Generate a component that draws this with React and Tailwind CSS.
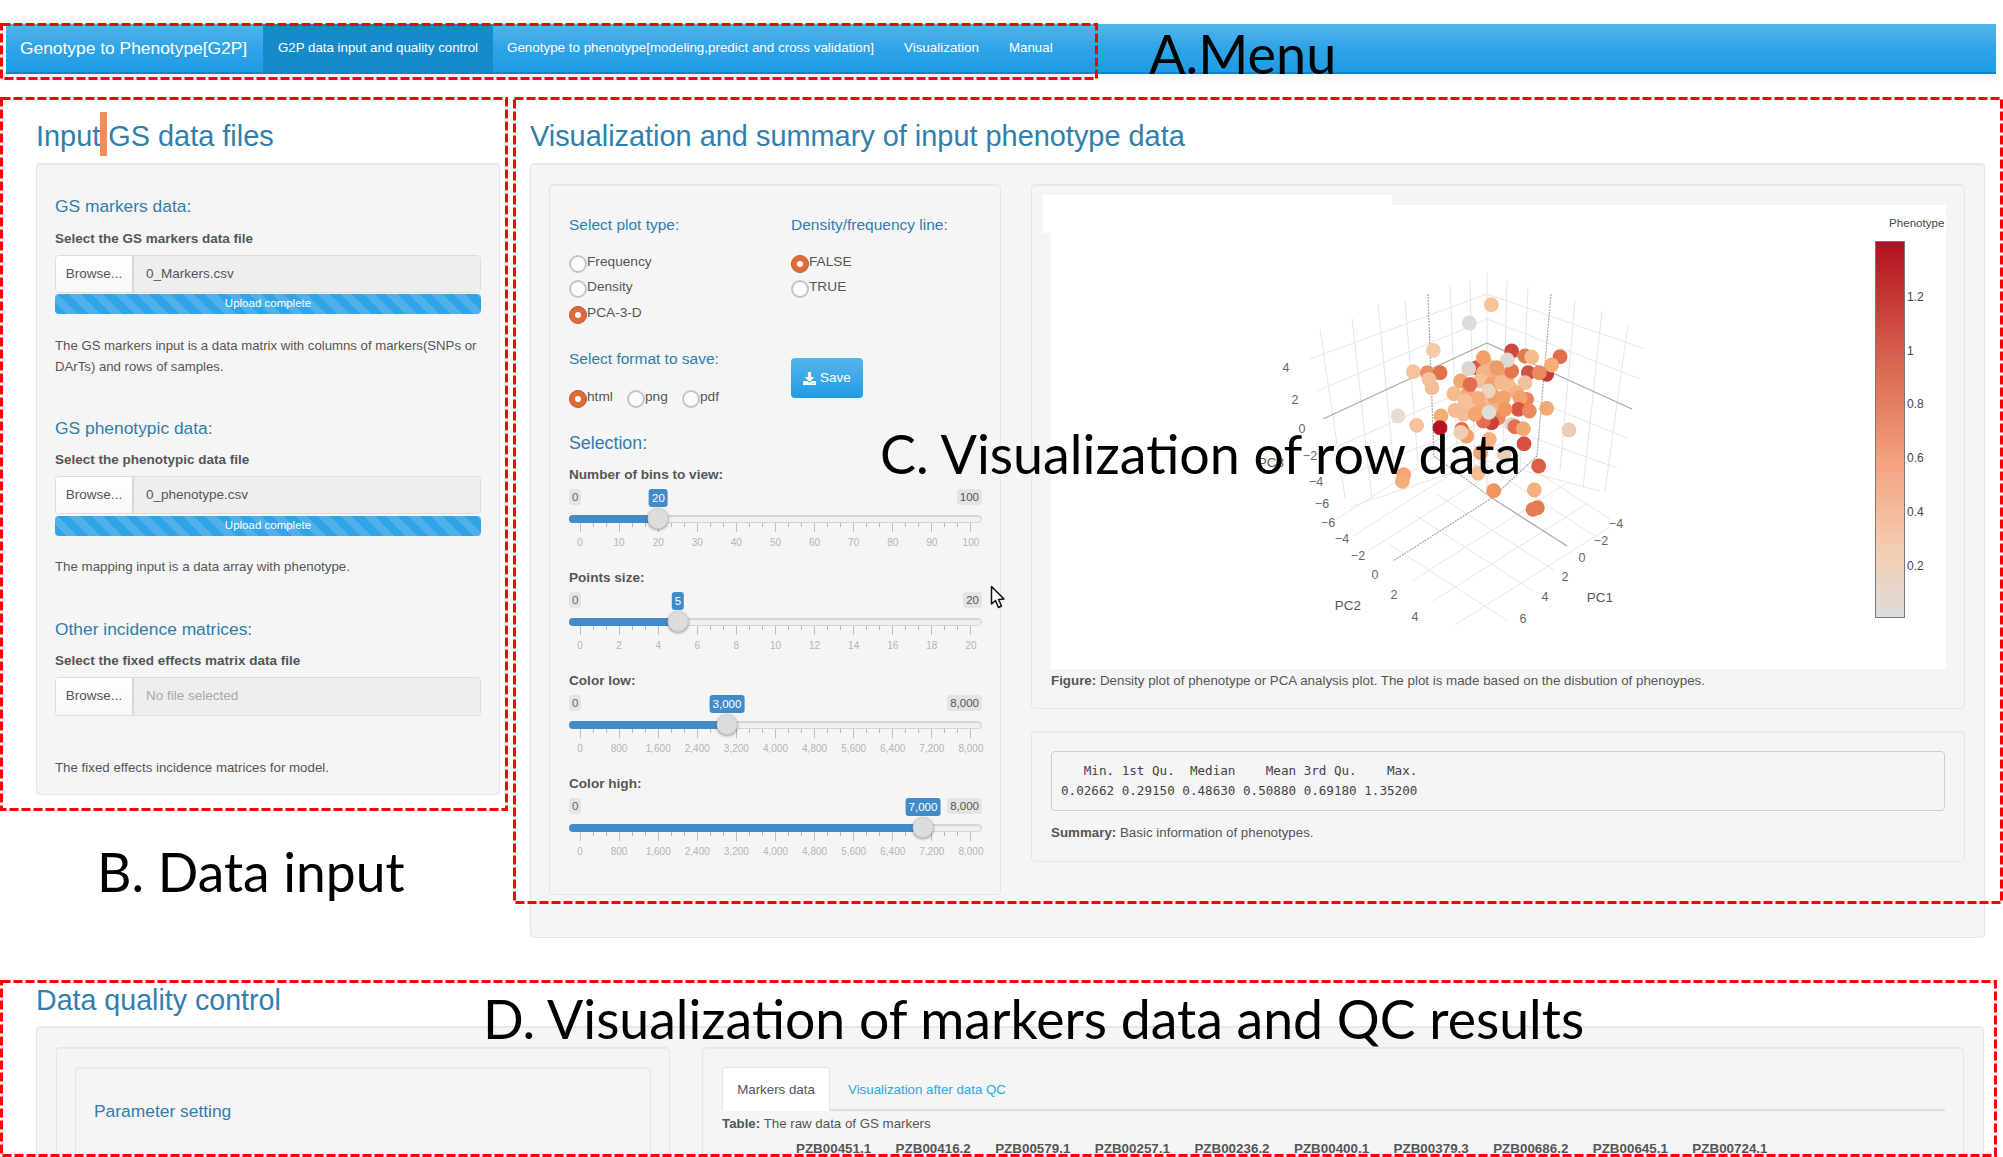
import React from "react";
import { FaDownload } from "react-icons/fa";

const POINTS = [
  [724,101,"#f6c39a"],[658,156,"#dedad6"],[550,238,"#f3cba9"],[490,302,"#f5c49c"],[532,305,"#eb8e60"],[570,305,"#e2704d"],
  [537,325,"#f3c19b"],[546,350,"#f4bf98"],[785,240,"#c94a3e"],[825,255,"#e17a52"],[845,258,"#f6ba8b"],[930,257,"#e06a4a"],
  [890,310,"#c93a36"],[835,305,"#d2503f"],[868,305,"#ea8a5c"],[905,282,"#f5ae78"],[680,290,"#d45a45"],[715,285,"#f4b78b"],
  [745,305,"#f2a873"],[700,305,"#f4b485"],[735,320,"#f3ad7c"],[770,320,"#f2a570"],[655,365,"#f2a672"],[700,385,"#f4bd94"],
  [735,395,"#f3b083"],[780,350,"#f4bd96"],[730,375,"#efa06b"],[660,410,"#f5c09a"],[695,415,"#f3ab79"],[745,440,"#ec8a5e"],
  [700,260,"#f2a06a"],[785,300,"#e5774f"],[772,267,"#dfd9d3"],[656,293,"#dfd5cc"],[740,290,"#ef9b68"],[632,330,"#f3a874"],
  [690,330,"#f4c09a"],[660,340,"#e36d4d"],[725,340,"#f2a16d"],[755,335,"#f5ba8f"],[825,335,"#f3c19d"],[715,360,"#ecd4c0"],
  [612,368,"#f5bb8f"],[685,382,"#f3ad7c"],[645,390,"#f4c19a"],[800,365,"#f3b184"],[760,380,"#f2a46f"],[830,385,"#ea8458"],
  [810,380,"#f2a36d"],[805,415,"#d85443"],[838,420,"#ed8a5c"],[890,412,"#f4a975"],[725,455,"#cc4136"],[700,450,"#e46f4e"],
  [615,418,"#f5ba8f"],[640,430,"#f4bd96"],[675,430,"#f3a56f"],[765,415,"#f1985f"],[717,424,"#e0dcd8"],[573,435,"#f4ad79"],
  [444,435,"#e8dcd0"],[500,463,"#f5c09a"],[570,470,"#b5141e"],[635,475,"#e36d4d"],[650,495,"#f1a06a"],[632,484,"#f0cdb3"],
  [785,460,"#e0d6cc"],[795,467,"#e46e4f"],[820,473,"#f2a974"],[957,477,"#ecccb4"],[718,505,"#f4b181"],[822,518,"#d4503f"],
  [692,545,"#f2a46f"],[762,548,"#e5d0bc"],[866,585,"#dc5f45"],[684,606,"#f5bd94"],[461,611,"#f3a672"],[457,631,"#f3ad7b"],
  [731,659,"#ee9560"],[853,657,"#f4b07e"],[862,710,"#e87851"],[849,715,"#e67b54"],
];

const LEFT_ROWS = [[293,1310,358],[318,1317,390],[342,1323,418],[380,1338,445],[420,1345,475],[460,1350,506]];
const RIGHT_ROWS = [[293,1645,348],[318,1640,378],[342,1632,408],[380,1627,437],[420,1617,467],[460,1600,490]];
const WALL_V = [
  [1320,328,1345,497],[1352,317,1372,498],[1378,303,1395,478],[1405,300,1418,462],[1450,285,1458,470],[1470,280,1475,480],[1487,272,1487,490],
  [1507,280,1502,480],[1528,285,1520,470],[1575,300,1560,470],[1602,310,1583,487],[1628,323,1605,490],
];
const FLOOR_A = [[1337,518],[1353,535],[1368,550],[1412,580],[1433,600],[1455,624]];
const FLOOR_B = [[1610,518],[1595,535],[1554,569],[1533,590],[1508,620]];
const TICKS = [
  ["4",1286,367],["2",1295,399],["0",1302,428],["−2",1310,455],["−4",1316,481],["−6",1322,503],
  ["−6",1328,522],["−4",1342,538],["−2",1358,555],["0",1375,574],["2",1394,594],["4",1415,616],
  ["−4",1616,523],["−2",1601,540],["0",1582,557],["2",1565,576],["4",1545,596],["6",1523,618],
];
const CBAR = [["1.2",296],["1",350],["0.8",403],["0.6",457],["0.4",511],["0.2",565]];

function Plot3D() {
  return (
    <svg viewBox="1051 204 895 464" className="block w-[895px] h-[464px] bg-white">
      <defs>
        <linearGradient id="cb" x1="0" y1="0" x2="0" y2="1">
          <stop offset="0" stopColor="#b10f1e" />
          <stop offset="0.3" stopColor="#d6604d" />
          <stop offset="0.6" stopColor="#f4a582" />
          <stop offset="0.82" stopColor="#f3cdb2" />
          <stop offset="1" stopColor="#dcdcdc" />
        </linearGradient>
      </defs>
      <g stroke="#e6e6e6" strokeWidth="1" fill="none">
        {LEFT_ROWS.map(([y, x2, y2], i) => i !== 2 && <line key={"l" + i} x1="1487" y1={y} x2={x2} y2={y2} />)}
        {RIGHT_ROWS.map(([y, x2, y2], i) => i !== 2 && <line key={"r" + i} x1="1487" y1={y} x2={x2} y2={y2} />)}
        {WALL_V.map(([a, b, c, d], i) => <line key={"v" + i} x1={a} y1={b} x2={c} y2={d} />)}
        {FLOOR_A.map(([a, b], i) => <line key={"a" + i} x1={a} y1={b} x2={a + 155} y2={b - 98} />)}
        {FLOOR_B.map(([a, b], i) => <line key={"b" + i} x1={a} y1={b} x2={a - 118} y2={b - 76} />)}
      </g>
      <g stroke="#a8a8a8" strokeWidth="1.2" fill="none">
        <line x1="1487" y1="342" x2="1323" y2="418" />
        <line x1="1487" y1="342" x2="1632" y2="408" />
        <line x1="1428" y1="293" x2="1434" y2="455" strokeDasharray="2 1" />
        <line x1="1551" y1="293" x2="1537" y2="455" strokeDasharray="2 1" />
        <line x1="1537" y1="455" x2="1492" y2="497" strokeDasharray="2 1" />
        <line x1="1434" y1="455" x2="1492" y2="497" strokeDasharray="2 1" />
        <line x1="1492" y1="497" x2="1567" y2="545" />
        <line x1="1492" y1="497" x2="1393" y2="560" strokeDasharray="2 1" />
      </g>
      {POINTS.map(([x, y, c], i) => (
        <circle key={i} cx={1250 + x / 3} cy={270 + y / 3} r="7.4" fill={c} />
      ))}
      <g fill="#666" fontSize="12.5" textAnchor="middle" dominantBaseline="central">
        {TICKS.map(([t, x, y], i) => <text key={i} x={x} y={y}>{t}</text>)}
      </g>
      <g fill="#555" fontSize="13.5" textAnchor="middle" dominantBaseline="central">
        <text x="1271" y="461">PC3</text>
        <text x="1348" y="604">PC2</text>
        <text x="1600" y="596">PC1</text>
      </g>
      <text x="1889" y="221" fontSize="11.6" fill="#444" dominantBaseline="central">Phenotype</text>
      <rect x="1875.5" y="240.5" width="29" height="376" fill="url(#cb)" stroke="#777" />
      <g fill="#444" fontSize="12" dominantBaseline="central">
        {CBAR.map(([t, y]) => <text key={t} x="1907" y={y}>{t}</text>)}
      </g>
    </svg>
  );
}

function Heading({ className, children }) {
  return <div className={`text-[#317eac] text-[17.4px] leading-[24px] h-[24px] ${className}`}>{children}</div>;
}

function FieldLabel({ className, children }) {
  return <div className={`font-bold text-[13.5px] leading-[20px] h-[20px] text-[#555] ${className}`}>{children}</div>;
}

function FileInput({ name, className, empty }) {
  return (
    <div className={`flex rounded-[4px] border border-[#dcdcdc] overflow-hidden text-[13.5px] ${className}`}>
      <div className="w-[78px] flex items-center justify-center bg-gradient-to-b from-white to-[#f8f8f8] text-[#555] border-r-2 border-[#d8d8d8]">Browse...</div>
      <div className={`flex-1 flex items-center pl-[12px] bg-[#eeeeee] ${empty ? "text-[#a8a8a8]" : "text-[#555]"}`}>{name}</div>
    </div>
  );
}

function Progress({ className }) {
  return (
    <div className={`rounded-[4px] text-white text-[11.5px] flex items-center justify-center bg-[repeating-linear-gradient(45deg,#2fa4e7_0_8px,#4fb0ea_8px_16px)] ${className}`}>
      Upload complete
    </div>
  );
}

function Radio({ on, className = "" }) {
  return on ? (
    <span className={`block shrink-0 w-[18px] h-[18px] rounded-full bg-[#dd6a37] border border-[#c5552a] flex items-center justify-center ${className}`}>
      <span className="block w-[6px] h-[6px] rounded-full bg-white" />
    </span>
  ) : (
    <span className={`block shrink-0 w-[18px] h-[18px] rounded-full bg-[#fbfbfb] border-2 border-[#c4c4c4] ${className}`} />
  );
}

function RadioRow({ on, label, className }) {
  return (
    <div className={`flex items-start text-[13.7px] leading-[20px] text-[#555] ${className}`}>
      <Radio on={on} className="mt-[3px] mr-[-1px]" />
      <span className="ml-[1px]">{label}</span>
    </div>
  );
}

function Slider({ label, min, max, value, frac, labels }) {
  const center = 11 + frac * 392;
  const ticks = Array.from({ length: 31 }, (_, i) => i);
  return (
    <div className="h-[103px] w-[413px]">
      <div className="font-bold text-[13.6px] leading-[20px] h-[20px] text-[#555]">{label}</div>
      <div className="relative h-[18px] mt-[4px] text-[11.5px] leading-[16px]">
        <span className="absolute left-0 top-0 h-[16px] rounded-[3px] bg-[#e4e4e4] text-[#666] px-[3px]">{min}</span>
        <span className="absolute right-0 top-0 h-[16px] rounded-[3px] bg-[#e4e4e4] text-[#555] px-[3px]">{max}</span>
        <span className="absolute top-0 h-[18px] leading-[19px] rounded-[3px] bg-[#428bca] text-white px-[3px] -translate-x-1/2" style={{ left: center }}>{value}</span>
      </div>
      <div className="relative h-[8px] mt-[8px] rounded-full bg-[#f0f0f0] border border-[#d4d4d4] shadow-[inset_0_1px_1px_rgba(0,0,0,0.12)]">
        <div className="absolute left-[-1px] top-[-1px] h-[8px] rounded-l-full bg-[#428bca]" style={{ width: center }} />
        <div className="absolute top-[-8px] w-[21px] h-[21px] rounded-full bg-[#dddddd] border border-[#cfcfcf] shadow-[0_1px_3px_rgba(0,0,0,0.4)] -translate-x-1/2" style={{ left: center - 1 }} />
      </div>
      <div className="flex justify-between items-start mx-[11px] h-[9px]">
        {ticks.map((i) =>
          i % 3 === 0 ? (
            <span key={i} className="block w-px h-[9px] bg-[#a8c4e0]" />
          ) : (
            <span key={i} className="block w-px h-[4px] bg-[#b8b8b8]" />
          )
        )}
      </div>
      <div className="flex justify-between mx-[11px] mt-[5px] h-[12px] text-[10px] leading-[12px] text-[#b4b4b4]">
        {labels.map((t, i) => (
          <span key={i} className="w-0 flex justify-center whitespace-nowrap">{t}</span>
        ))}
      </div>
    </div>
  );
}

function DashBox({ left, top, width, height }) {
  return (
    <svg className="absolute pointer-events-none" style={{ left, top }} width={width} height={height}>
      <rect x="1.5" y="1.5" width={width - 3} height={height - 3} fill="none" stroke="#ff0000" strokeWidth="3" strokeDasharray="9 3" />
    </svg>
  );
}

const L100 = ["0","10","20","30","40","50","60","70","80","90","100"];
const L20 = ["0","2","4","6","8","10","12","14","16","18","20"];
const L8K = ["0","800","1,600","2,400","3,200","4,000","4,800","5,600","6,400","7,200","8,000"];
const COLS = ["PZB00451.1","PZB00416.2","PZB00579.1","PZB00257.1","PZB00236.2","PZB00400.1","PZB00379.3","PZB00686.2","PZB00645.1","PZB00724.1"];
const WELL = "bg-[#f5f5f5] border border-[#e6e6e6] rounded-[4px] shadow-[inset_0_1px_1px_rgba(0,0,0,0.05)]";

export default function App() {
  return (
    <div className="relative w-[2003px] h-[1157px] overflow-hidden bg-white text-[#555] font-['Liberation_Sans',Arial,sans-serif]">
      {/* Navbar */}
      <nav className="ml-[6px] mt-[24px] w-[1990px] h-[50px] flex items-stretch text-white bg-gradient-to-b from-[#54b4eb] via-[#2fa4e7] to-[#1d9ce5] border-b-2 border-[#1082cf] shadow-[0_4px_8px_rgba(0,0,0,0.06)]">
        <div className="flex items-center w-[257px] pl-[14px] text-[17.4px]">Genotype to Phenotype[G2P]</div>
        <div className="flex items-center w-[230px] justify-center bg-[#178acc] text-[13.3px]">G2P data input and quality control</div>
        <div className="flex items-center pl-[14px] w-[411px] text-[13.4px]">Genotype to phenotype[modeling,predict and cross validation]</div>
        <div className="flex items-center w-[105px] text-[13.4px]">Visualization</div>
        <div className="flex items-center text-[13.3px]">Manual</div>
      </nav>

      {/* Upper content */}
      <div className="flex mt-[42px]">
        {/* Data input */}
        <div className="w-[530px] pl-[36px] shrink-0">
          <h2 className="h-[47px] text-[28.9px] leading-[41px] text-[#317eac]">Input GS data files</h2>
          <div className={`w-[464px] h-[632px] pt-[30px] px-[18px] ${WELL}`}>
            <Heading>GS markers data:</Heading>
            <FieldLabel className="mt-[11px]">Select the GS markers data file</FieldLabel>
            <FileInput name="0_Markers.csv" className="mt-[6px] h-[38px]" />
            <Progress className="mt-[1px] h-[20px]" />
            <p className="mt-[21px] text-[13.2px] leading-[21px] whitespace-nowrap">The GS markers input is a data matrix with columns of markers(SNPs or<br />DArTs) and rows of samples.</p>
            <Heading className="mt-[38.5px]">GS phenotypic data:</Heading>
            <FieldLabel className="mt-[10px]">Select the phenotypic data file</FieldLabel>
            <FileInput name="0_phenotype.csv" className="mt-[6.5px] h-[38px]" />
            <Progress className="mt-[2px] h-[20px]" />
            <p className="mt-[20px] text-[13.3px] leading-[21px]">The mapping input is a data array with phenotype.</p>
            <Heading className="mt-[40px]">Other incidence matrices:</Heading>
            <FieldLabel className="mt-[10px]">Select the fixed effects matrix data file</FieldLabel>
            <FileInput name="No file selected" empty className="mt-[6px] h-[39px]" />
            <p className="mt-[41px] text-[13.3px] leading-[21px]">The fixed effects incidence matrices for model.</p>
          </div>
        </div>

        {/* Visualization */}
        <div className="flex-1">
          <h2 className="h-[47px] text-[28.9px] leading-[41px] text-[#317eac]">Visualization and summary of input phenotype data</h2>
          <div className={`w-[1455px] h-[775px] pt-[20px] pl-[18px] flex items-start gap-[30px] ${WELL}`}>
            {/* Controls */}
            <div className={`w-[452px] h-[711px] pt-[29px] pl-[19px] shrink-0 ${WELL}`}>
              <div className="flex h-[217px]">
                <div className="w-[222px]">
                  <div className="text-[#317eac] text-[15.5px] leading-[22px] h-[22px]">Select plot type:</div>
                  <RadioRow label="Frequency" className="mt-[16px] h-[25px]" />
                  <RadioRow label="Density" className="h-[26px]" />
                  <RadioRow label="PCA-3-D" on className="h-[25px]" />
                  <div className="text-[#317eac] text-[15.5px] leading-[22px] h-[22px] mt-[20px]">Select format to save:</div>
                  <div className="flex mt-[17px] h-[22px]">
                    <RadioRow on label="html" className="w-[58px]" />
                    <RadioRow label="png" className="w-[55px]" />
                    <RadioRow label="pdf" />
                  </div>
                </div>
                <div>
                  <div className="text-[#317eac] text-[15.5px] leading-[22px] h-[22px]">Density/frequency line:</div>
                  <RadioRow on label="FALSE" className="mt-[16px] h-[25px]" />
                  <RadioRow label="TRUE" className="h-[25px]" />
                  <button className="mt-[56px] w-[72px] h-[40px] rounded-[4px] flex items-center justify-center gap-[4px] text-white text-[13.5px] bg-gradient-to-b from-[#54b4eb] to-[#1d9ce5]">
                    <FaDownload className="w-[13px] h-[13px]" />Save
                  </button>
                </div>
              </div>
              <div className="text-[#317eac] text-[17.8px] leading-[24px] h-[24px]">Selection:</div>
              <div className="mt-[10px]">
                <Slider label="Number of bins to view:" min="0" max="100" value="20" frac={0.2} labels={L100} />
                <Slider label="Points size:" min="0" max="20" value="5" frac={0.25} labels={L20} />
                <Slider label="Color low:" min="0" max="8,000" value="3,000" frac={0.375} labels={L8K} />
                <Slider label="Color high:" min="0" max="8,000" value="7,000" frac={0.875} labels={L8K} />
              </div>
            </div>

            {/* Output */}
            <div className="w-[934px] shrink-0">
              <div className={`relative h-[525px] pt-[20px] px-[19px] ${WELL}`}>
                <div className="absolute left-[11px] top-[10px] w-[349px] h-[38px] bg-white" />
                <div className="relative"><Plot3D /></div>
                <div className="mt-[2px] text-[13.35px] leading-[20px]"><b>Figure:</b> Density plot of phenotype or PCA analysis plot. The plot is made based on the disbution of phenoypes.</div>
              </div>
              <div className={`mt-[22px] h-[131px] pt-[19px] px-[19px] ${WELL}`}>
                <pre className="h-[60px] pt-[9px] pl-[9px] border border-[#cfcfcf] rounded-[4px] bg-[#f5f5f5] text-[#444] text-[12.6px] leading-[19.5px] font-['DejaVu_Sans_Mono',monospace]">{"   Min. 1st Qu.  Median    Mean 3rd Qu.    Max. \n0.02662 0.29150 0.48630 0.50880 0.69180 1.35200 "}</pre>
                <div className="mt-[12px] text-[13.35px] leading-[20px]"><b>Summary:</b> Basic information of phenotypes.</div>
              </div>
            </div>
          </div>
        </div>
      </div>

      {/* Data quality control */}
      <div className="pl-[36px] mt-[39px]">
        <h2 className="h-[49px] text-[28.6px] leading-[46px] text-[#317eac]">Data quality control</h2>
        <div className={`w-[1948px] h-[300px] pt-[20px] pl-[19px] flex items-start gap-[32px] ${WELL}`}>
          <div className={`w-[614px] h-[260px] pt-[19px] px-[18px] shrink-0 ${WELL}`}>
            <div className={`h-[200px] pl-[18px] pt-[31px] text-[#317eac] text-[17.4px] leading-[24px] ${WELL}`}>Parameter setting</div>
          </div>
          <div className={`w-[1262px] h-[260px] pt-[19px] px-[19px] shrink-0 ${WELL}`}>
            <div className="flex h-[44px] w-[1223px] border-b-2 border-[#dddddd] text-[13.3px]">
              <div className="w-[108px] h-[44px] flex items-center justify-center bg-white border border-b-0 border-[#e4e4e4] rounded-t-[4px] text-[#555]">Markers data</div>
              <div className="ml-[18px] pt-[3px] flex items-center text-[#2fa4e7]">Visualization after data QC</div>
            </div>
            <div className="mt-[3px] text-[13.3px] leading-[20px]"><b>Table:</b> The raw data of GS markers</div>
            <div className="flex mt-[6px] pl-[74px] font-bold text-[13.4px] leading-[18px] text-[#555]">
              {COLS.map((c) => <span key={c} className="w-[99.6px] shrink-0">{c}</span>)}
            </div>
          </div>
        </div>
      </div>

      {/* Overlays: orange marker, pointer, annotations */}
      <div className="absolute left-[100px] top-[112px] w-[7px] h-[44px] bg-[#f58b57]" />
      <svg className="absolute left-[990px] top-[585px]" width="16" height="25" viewBox="0 0 16 25">
        <path d="M1.5 1.5 L1.5 19 L5.5 15.5 L8.5 22.5 L11.5 21 L8.5 14.5 L14 14 Z" fill="#fff" stroke="#111" strokeWidth="1.5" strokeLinejoin="round" />
      </svg>

      <DashBox left={0} top={23} width={1098} height={57} />
      <DashBox left={0} top={97} width={508} height={714} />
      <DashBox left={513} top={97} width={1490} height={807} />
      <DashBox left={0} top={980} width={1997} height={177} />

      <div className="absolute left-[1149px] top-[22px] text-[54px] leading-[64px] text-black whitespace-nowrap font-['Lato',sans-serif]">A.Menu</div>
      <div className="absolute left-[97px] top-[839px] text-[53.4px] leading-[64px] text-black whitespace-nowrap font-['Lato',sans-serif]">B. Data input</div>
      <div className="absolute left-[880px] top-[421px] text-[53.8px] leading-[64px] text-black whitespace-nowrap font-['Lato',sans-serif]">C. Visualization of row data</div>
      <div className="absolute left-[483px] top-[986px] text-[53.6px] leading-[64px] text-black whitespace-nowrap font-['Lato',sans-serif]">D. Visualization of markers data and QC results</div>
    </div>
  );
}
